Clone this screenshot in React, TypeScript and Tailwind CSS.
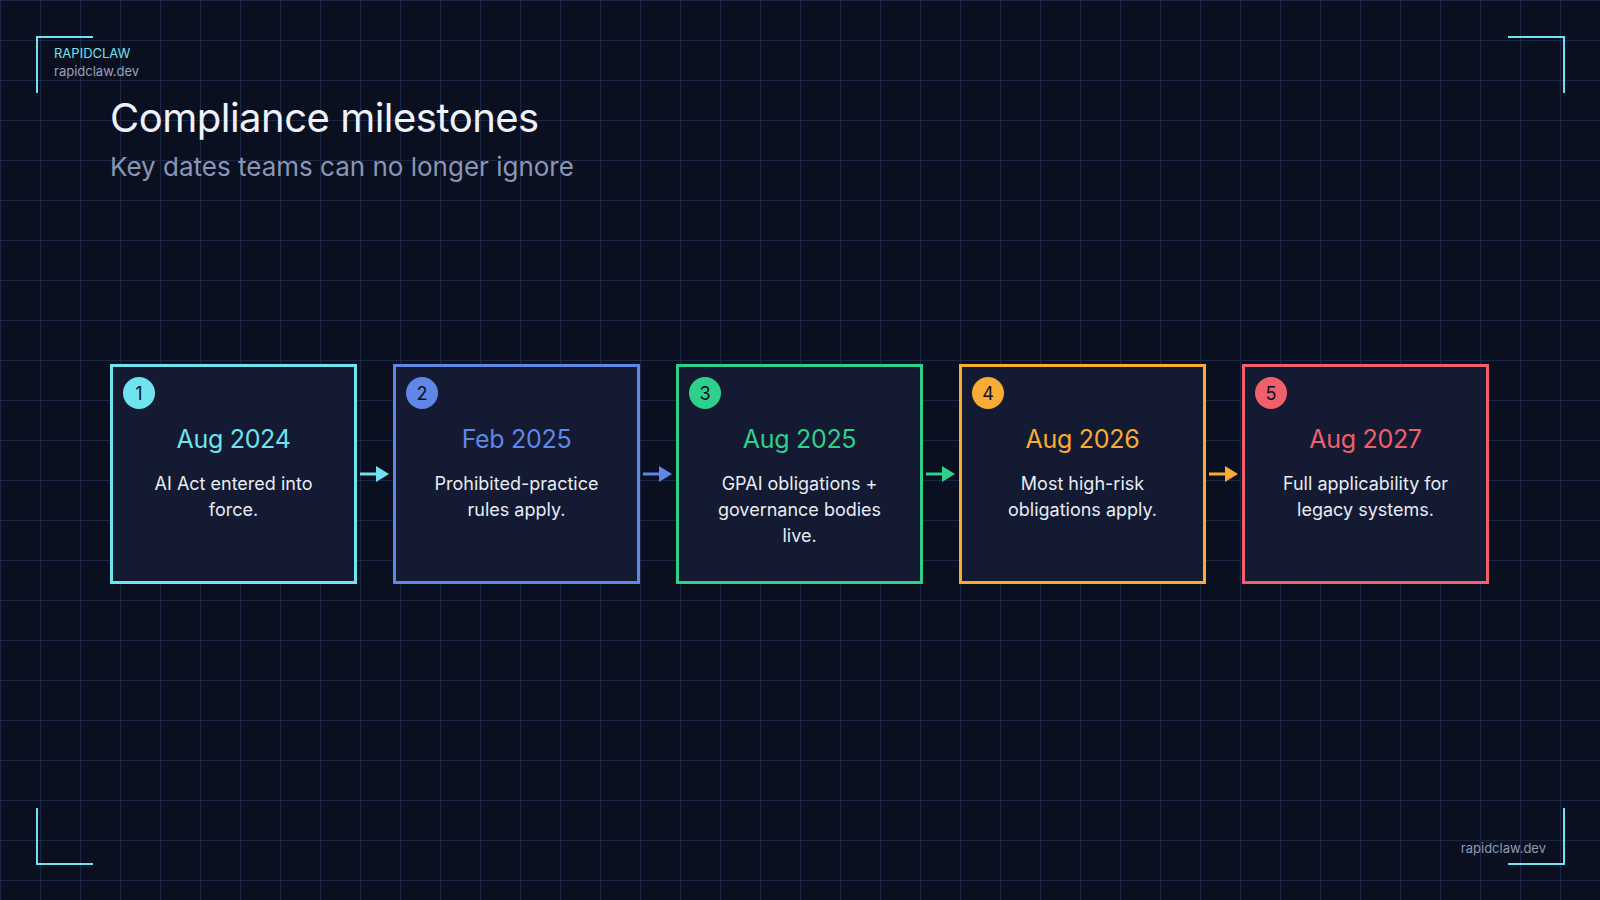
import React from 'react';

const milestones = [
  { n: 1, date: 'Aug 2024', text: 'AI Act entered into force.', border: 'border-[#6fe3ef]', color: 'text-[#6fe3ef]', bg: 'bg-[#6fe3ef]' },
  { n: 2, date: 'Feb 2025', text: 'Prohibited-practice rules apply.', border: 'border-[#5f87e6]', color: 'text-[#5f87e6]', bg: 'bg-[#5f87e6]' },
  { n: 3, date: 'Aug 2025', text: 'GPAI obligations + governance bodies live.', border: 'border-[#2fcf8c]', color: 'text-[#2fcf8c]', bg: 'bg-[#2fcf8c]' },
  { n: 4, date: 'Aug 2026', text: 'Most high-risk obligations apply.', border: 'border-[#f8ac33]', color: 'text-[#f8ac33]', bg: 'bg-[#f8ac33]' },
  { n: 5, date: 'Aug 2027', text: 'Full applicability for legacy systems.', border: 'border-[#f05f6c]', color: 'text-[#f05f6c]', bg: 'bg-[#f05f6c]' },
];

const arrowColors = ['#6fe3ef', '#5f87e6', '#2fcf8c', '#f8ac33'];

function Arrow({ color }: { color: string }) {
  return (
    <div className="w-[36px] flex items-center justify-center">
      <svg width="30" height="20" viewBox="0 0 30 20">
        <line x1="0" y1="10" x2="18" y2="10" stroke={color} strokeWidth="3" />
        <polygon points="16,2 29,10 16,18" fill={color} />
      </svg>
    </div>
  );
}

export default function App() {
  return (
    <div
      className="relative w-[1600px] h-[900px] overflow-hidden bg-[#0b1020] text-white bg-[linear-gradient(#1a2745_1px,transparent_1px),linear-gradient(90deg,#1a2745_1px,transparent_1px)] bg-[length:40px_40px]"
      style={{ fontFamily: 'Inter, "Noto Sans", sans-serif' }}
    >
      {/* corner brackets */}
      <div className="absolute left-[36px] top-[36px] w-[57px] h-[57px] border-l-2 border-t-2 border-[#6fe3ef]" />
      <div className="absolute right-[35px] top-[36px] w-[57px] h-[57px] border-r-2 border-t-2 border-[#6fe3ef]" />
      <div className="absolute left-[36px] bottom-[35px] w-[57px] h-[57px] border-l-2 border-b-2 border-[#6fe3ef]" />
      <div className="absolute right-[35px] bottom-[35px] w-[57px] h-[57px] border-r-2 border-b-2 border-[#6fe3ef]" />
      <div className="absolute right-[54px] bottom-[42px] text-[13px] text-[#8d99b5]">rapidclaw.dev</div>

      <div className="absolute left-[54px] top-[44px] leading-[18px]">
        <div className="text-[13px] text-[#6fe3ef]">RAPIDCLAW</div>
        <div className="text-[13px] text-[#97a3bd]">rapidclaw.dev</div>
      </div>

      <div className="pl-[110px] pt-[93px]">
        <h1 className="text-[40px] leading-[50px] text-[#eef2fb] tracking-[-0.5px]">Compliance milestones</h1>
        <p className="mt-[7px] text-[26px] leading-[34px] text-[#8a96b3]">Key dates teams can no longer ignore</p>

        <div className="mt-[180px] flex items-center">
          {milestones.map((m, i) => (
            <React.Fragment key={m.n}>
              <div className={`w-[247px] h-[220px] border-[3px] ${m.border} bg-[#131a31] px-[10px] pt-[10px]`}>
                <div className={`w-[32px] h-[32px] rounded-full ${m.bg} text-[#0b1020] text-[18px] flex items-center justify-center`}>{m.n}</div>
                <div className={`mt-[12px] text-center text-[25px] ${m.color} tracking-[-0.3px]`}>{m.date}</div>
                <div className="mt-[12px] mx-auto w-[190px] text-center text-[18px] leading-[26px] text-[#e8ecf5]">{m.text}</div>
              </div>
              {i < arrowColors.length && <Arrow color={arrowColors[i]} />}
            </React.Fragment>
          ))}
        </div>
      </div>
    </div>
  );
}
